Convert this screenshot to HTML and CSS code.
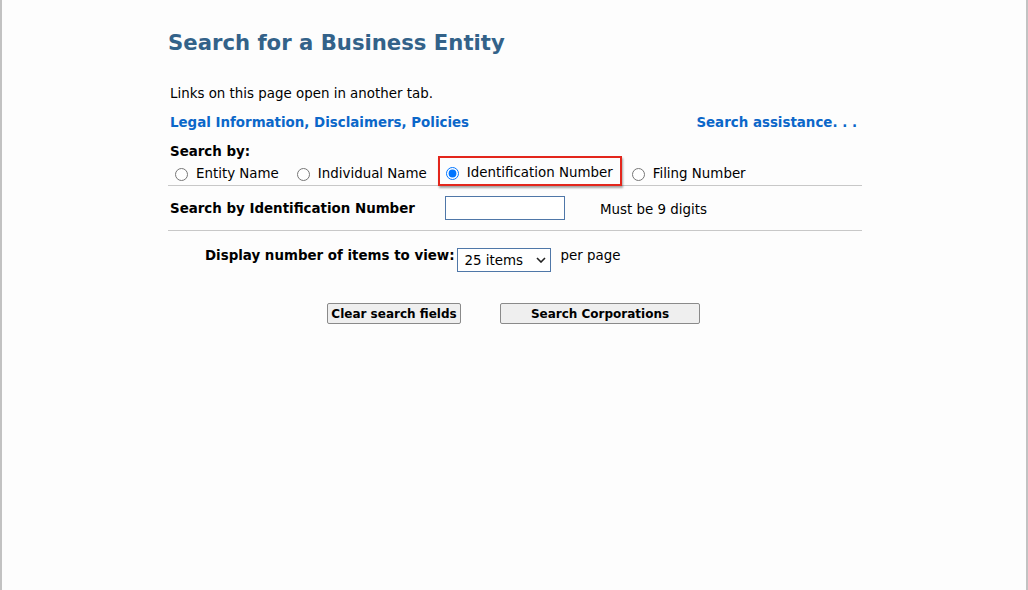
FILE: index.html
```html
<!DOCTYPE html>
<html>
<head>
<meta charset="utf-8">
<link rel="stylesheet" href="styles.css">
</head>
<body>
<div class="frame">
  <div class="content">
    <h1 class="title">Search for a Business Entity</h1>
    <p class="note">Links on this page open in another tab.</p>
    <div class="links">
      <a class="link" href="#">Legal Information, Disclaimers, Policies</a>
      <a class="link" href="#">Search assistance. . .</a>
    </div>
    <div class="searchby">
      <div class="label-bold">Search by:</div>
      <div class="radios">
        <label class="radio"><input type="radio" name="by"><span>Entity Name</span></label>
        <label class="radio"><input type="radio" name="by"><span>Individual Name</span></label>
        <span class="highlight"><label class="radio"><input type="radio" name="by" checked><span>Identification Number</span></label></span>
        <label class="radio"><input type="radio" name="by"><span>Filing Number</span></label>
      </div>
    </div>
    <div class="idrow">
      <div class="label-bold idlabel">Search by Identification Number</div>
      <input class="idinput" type="text">
      <span class="hint">Must be 9 digits</span>
    </div>
    <div class="displayrow">
      <span class="label-bold">Display number of items to view:</span>
      <span class="selectbox">25 items<svg class="chev" width="10" height="6" viewBox="0 0 10 6"><path d="M1 1 L5 5 L9 1" fill="none" stroke="#222" stroke-width="1.6"/></svg></span>
      <span class="perpage">per page</span>
    </div>
    <div class="buttons">
      <button class="btn btn-clear">Clear search fields</button>
      <button class="btn btn-search">Search Corporations</button>
    </div>
  </div>
</div>
</body>
</html>
```

FILE: styles.css
```css
html, body {
  margin: 0;
  padding: 0;
  background: #fff;
}
body {
  font-family: "DejaVu Sans", Verdana, sans-serif;
  font-size: 13.4px;
  color: #000;
}
.frame {
  height: 590px;
  box-sizing: border-box;
  border-left: 2px solid #c2c2c2;
  border-right: 2px solid #c2c2c2;
  background: #fdfdfd;
}
.content {
  margin-left: 166px;
  width: 694px;
  padding-top: 30px;
}
.title {
  margin: 0;
  font-size: 21.2px;
  font-weight: bold;
  color: #336289;
  line-height: 26px;
}
.note {
  margin: 30px 0 0 2px;
  line-height: 16px;
}
.links {
  display: flex;
  justify-content: space-between;
  margin: 13px 5px 0 2px;
  line-height: 16px;
}
.link {
  color: #0b67c9;
  font-weight: bold;
  text-decoration: none;
}
.searchby {
  margin-top: 13px;
  padding-left: 2px;
  border-bottom: 1px solid #c8c8c8;
}
.label-bold {
  font-weight: bold;
  line-height: 16px;
}
.radios {
  display: flex;
  align-items: center;
  box-sizing: border-box;
  height: 25px;
  padding-top: 3px;
}
.radio {
  display: inline-flex;
  align-items: center;
  margin-right: 13px;
  line-height: 16px;
}
.radio input {
  margin: 0 8px 0 5px;
  width: 13px;
  height: 13px;
}
.highlight {
  position: relative;
  display: inline-flex;
  align-items: center;
  box-sizing: border-box;
  height: 30px;
  border: 2px solid #e3261c;
  box-shadow: 1px 2px 2px rgba(0,0,0,0.35);
  background: #fdfdfd;
  padding: 4px 7px 0 1px;
  margin: -6px 5px 0 -2px;
}
.highlight .radio {
  margin-right: 0;
}
.idrow {
  display: flex;
  align-items: center;
  height: 42px;
  padding: 2px 0 0 2px;
  border-bottom: 1px solid #c8c8c8;
}
.idlabel {
  width: 275px;
}
.idinput {
  width: 120px;
  height: 24px;
  box-sizing: border-box;
  border: 1px solid #4f77a8;
  margin: -2px 0 0 0;
  padding: 0;
}
.hint {
  margin-left: 35px;
}
.displayrow {
  display: flex;
  align-items: flex-start;
  margin-top: 17px;
  padding-left: 37px;
}
.selectbox {
  display: inline-flex;
  align-items: center;
  justify-content: space-between;
  box-sizing: border-box;
  width: 94px;
  height: 24px;
  border: 1px solid #4f77a8;
  margin-left: 2px;
  padding: 0 4px 0 7px;
  background: #fff;
}
.chev {
  display: block;
}
.perpage {
  margin-left: 10px;
  line-height: 16px;
}
.buttons {
  display: flex;
  margin-top: 31px;
  padding-left: 159px;
}
.btn {
  font-family: "DejaVu Sans", Verdana, sans-serif;
  font-size: 12px;
  font-weight: bold;
  height: 21px;
  box-sizing: border-box;
  background: #efefef;
  border: 1px solid #8a8a8a;
  border-radius: 2px;
  padding: 0;
  color: #000;
}
.btn-clear {
  width: 134px;
}
.btn-search {
  width: 200px;
  margin-left: 39px;
}
```
